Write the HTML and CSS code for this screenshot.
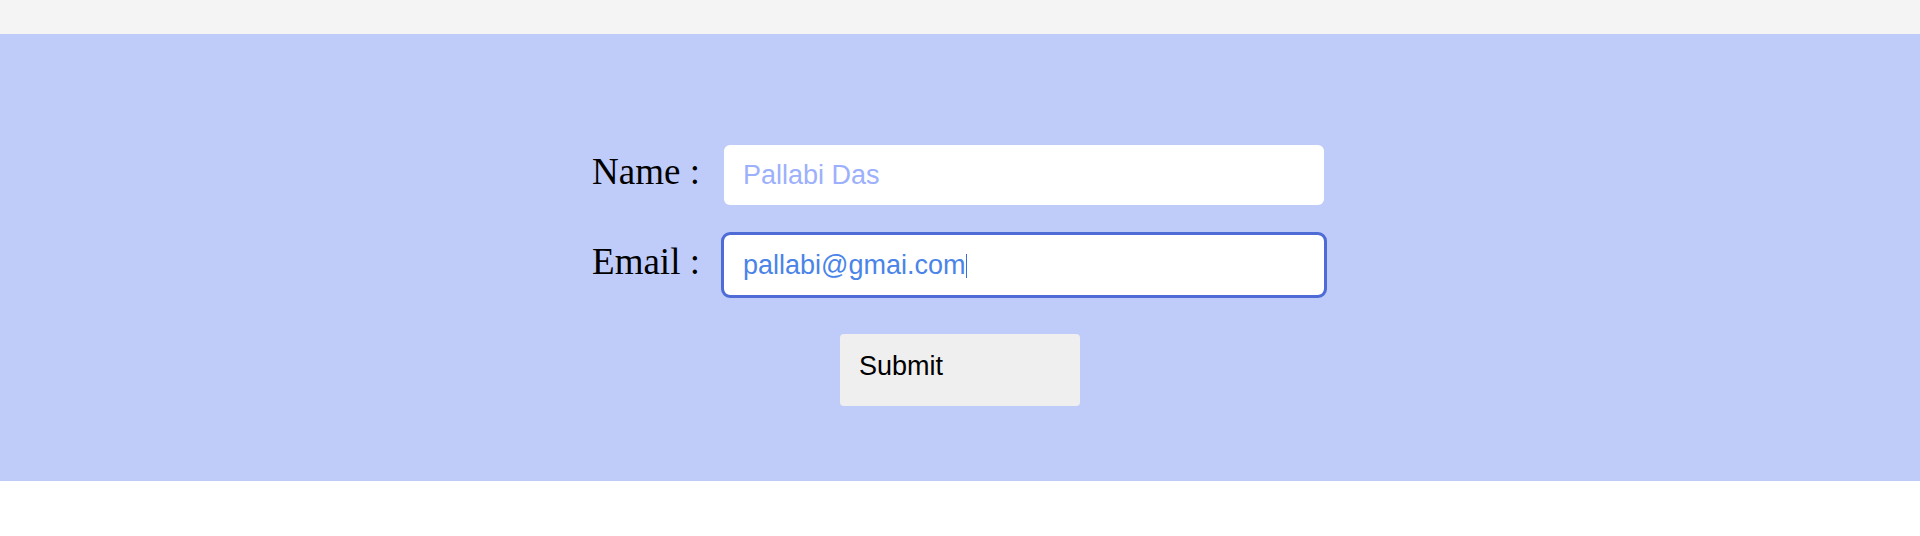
FILE: index.html
```html
<!DOCTYPE html>
<html lang="en">
<head>
<meta charset="utf-8">
<title>Form</title>
<link rel="stylesheet" href="styles.css">
</head>
<body>
  <div class="topbar"></div>
  <section class="panel">
    <form class="form">
      <div class="fields">
        <label class="label" for="name">Name :</label>
        <input class="field" id="name" type="text" placeholder="Pallabi Das">
        <label class="label" for="email">Email :</label>
        <div class="field-wrap">
          <input class="field field-active" id="email" type="text" value="pallabi@gmai.com">
          <span class="caret"></span>
        </div>
      </div>
      <button class="submit" type="button">Submit</button>
    </form>
  </section>
</body>
</html>
```
FILE: styles.css
```css
html, body {
  margin: 0;
  padding: 0;
  background: #ffffff;
}

.topbar {
  height: 34px;
  background: #f4f4f4;
}

.panel {
  height: 447px;
  box-sizing: border-box;
  background: #bfccfa;
  padding-top: 111px;
}

.form {
  display: flex;
  flex-direction: column;
  align-items: center;
}

.fields {
  display: grid;
  grid-template-columns: auto 600px;
  column-gap: 24px;
  row-gap: 30px;
  align-items: baseline;
  margin-left: -4px;
}

.label {
  font-family: "Liberation Serif", "Times New Roman", serif;
  font-size: 37px;
  color: #000000;
}

.field-wrap {
  position: relative;
  display: flex;
}

.field {
  width: 600px;
  height: 60px;
  box-sizing: border-box;
  border: none;
  border-radius: 6px;
  background: #ffffff;
  padding: 0 19px;
  font-family: "Liberation Sans", Arial, sans-serif;
  font-size: 27px;
  color: #4a84e8;
  outline: none;
}

.field::placeholder {
  color: #9db0fb;
  opacity: 1;
}

.field-active {
  outline: 3px solid #4e6bd6;
  outline-offset: 0;
}

.caret {
  position: absolute;
  left: 242px;
  top: 19px;
  width: 1px;
  height: 24px;
  background: #3b6fd8;
}

.submit {
  margin-top: 39px;
  width: 240px;
  height: 72px;
  box-sizing: border-box;
  border: none;
  border-radius: 4px;
  background: #efefef;
  padding: 17px 19px 0;
  display: flex;
  align-items: flex-start;
  justify-content: flex-start;
  font-family: "Liberation Sans", Arial, sans-serif;
  font-size: 27px;
  color: #000000;
  cursor: pointer;
}
```
